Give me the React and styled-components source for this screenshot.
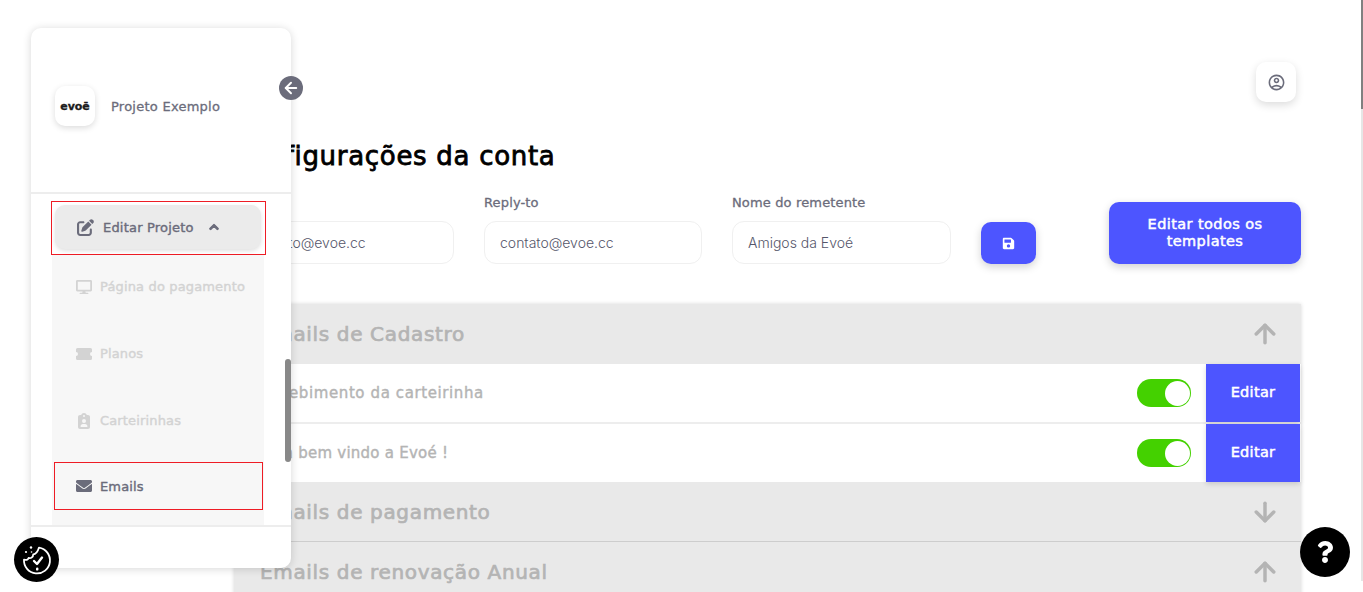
import React from 'react'
import styled, { createGlobalStyle } from 'styled-components'
import { ArrowUp, ArrowDown, ArrowLeft } from 'lucide-react'
import { FaEnvelope, FaSave, FaQuestion, FaChevronUp, FaDesktop } from 'react-icons/fa'
import { FaPenToSquare, FaClipboardUser } from 'react-icons/fa6'
import { MdOutlineAccountCircle } from 'react-icons/md'

const GlobalStyle = createGlobalStyle`
  html, body { margin: 0; padding: 0; background: #fff; overflow: hidden; }
  * { box-sizing: border-box; }
  body { font-family: "DejaVu Sans", sans-serif; }
`

const Page = styled.div`
  position: relative;
  width: 1363px;
  height: 592px;
  overflow: hidden;
`

const Main = styled.main`
  padding: 62px 62px 0 234px;
`

const TopBar = styled.div`
  display: flex;
  justify-content: flex-end;
  padding-right: 5px;
`

const ProfileButton = styled.button`
  width: 40px;
  height: 40px;
  border: none;
  border-radius: 10px;
  background: #fff;
  color: #6b6c7b;
  box-shadow: 0 3px 8px rgba(0, 0, 0, 0.14);
  display: flex;
  align-items: center;
  justify-content: center;
  padding: 0;
`

const Title = styled.h1`
  margin: 39px 0 24px -2px;
  height: 30px;
  line-height: 30px;
  font-size: 26px;
  font-weight: 400;
  letter-spacing: 0.7px;
  -webkit-text-stroke: 0.8px #000;
  color: #000;
  white-space: nowrap;
`

const FormRow = styled.div`
  display: flex;
  align-items: flex-end;
  padding: 0 0 0 2px;
  margin-bottom: 40px;
`

const Field = styled.label`
  width: ${(p) => p.$width}px;
  margin-right: 30px;
  display: flex;
  flex-direction: column;
  gap: 12px;
`

const FieldLabel = styled.span`
  height: 14px;
  line-height: 15px;
  font-size: 13px;
  letter-spacing: 0.15px;
  color: #6b6c7b;
  -webkit-text-stroke: 0.3px #6b6c7b;
`

const Input = styled.input`
  width: 100%;
  height: 43px;
  border: 1px solid #f0f0f0;
  border-radius: 12px;
  padding: 0 15px;
  font-family: "Inter", sans-serif;
  font-size: 14px;
  font-weight: 300;
  color: #55566a;
  background: #fff;
  outline: none;
`

const SaveButton = styled.button`
  width: 55px;
  height: 42px;
  border: none;
  border-radius: 10px;
  background: #4d55ff;
  color: #fff;
  box-shadow: 0 3px 8px rgba(0, 0, 0, 0.18);
  display: flex;
  align-items: center;
  justify-content: center;
  padding: 0;
`

const AllTemplatesButton = styled.button`
  margin-left: auto;
  width: 192px;
  height: 62px;
  border: none;
  border-radius: 10px;
  background: #4d55ff;
  color: #fff;
  box-shadow: 0 3px 8px rgba(0, 0, 0, 0.18);
  font-family: inherit;
  font-size: 14.5px;
  letter-spacing: 0.4px;
  -webkit-text-stroke: 0.5px #fff;
  line-height: 17px;
  padding: 0 26px;
`

const Accordion = styled.section`
  box-shadow: 0 0 4px rgba(0, 0, 0, 0.16);
`

const SectionHeader = styled.div`
  height: ${(p) => p.$height}px;
  padding: 0 21px 0 26px;
  display: flex;
  align-items: center;
  justify-content: space-between;
  background: #e9e9e9;
  color: #b4b4b4;
  font-size: 20px;
  letter-spacing: 0.65px;
  -webkit-text-stroke: 0.7px #b4b4b4;
  border-bottom: ${(p) => (p.$divider ? '1px solid #cdcdcd' : 'none')};
`

const Row = styled.div`
  height: ${(p) => p.$height}px;
  background: #fff;
  display: flex;
  align-items: center;
  padding: 0 1px 0 26px;
  color: #b4b4b4;
  font-size: 15px;
  -webkit-text-stroke: 0.4px #b4b4b4;
  border-bottom: ${(p) => (p.$divider ? '2px solid #ededed' : 'none')};
`

const RowText = styled.span`
  flex: 1;
  letter-spacing: ${(p) => p.$spacing}px;
  margin-top: -1px;
`

const Toggle = styled.span`
  width: 54px;
  height: 28px;
  border-radius: 14px;
  background: #44d100;
  display: flex;
  align-items: center;
  justify-content: flex-end;
  padding-right: 1px;
  margin-right: 15px;
`

const Knob = styled.span`
  width: 25px;
  height: 25px;
  border-radius: 50%;
  background: #fff;
`

const EditButton = styled.button`
  width: 94px;
  height: 100%;
  border: none;
  background: #4d55ff;
  color: #fff;
  font-family: inherit;
  font-size: 14.5px;
  letter-spacing: 0.3px;
  -webkit-text-stroke: 0.5px #fff;
  box-shadow: 0 2px 5px rgba(0, 0, 0, 0.14);
  padding: 0 0 2px;
`

const Sidebar = styled.aside`
  position: absolute;
  left: 31px;
  top: 28px;
  width: 260px;
  height: 540px;
  background: #fff;
  border-radius: 10px;
  box-shadow: 0 1px 8px rgba(0, 0, 0, 0.16);
  display: flex;
  flex-direction: column;
`

const SidebarHeader = styled.div`
  height: 166px;
  padding: 0 24px 8px;
  flex-shrink: 0;
  display: flex;
  align-items: center;
  gap: 16px;
  border-bottom: 2px solid #ededed;
`

const LogoBox = styled.div`
  width: 40px;
  height: 40px;
  border-radius: 10px;
  background: #fff;
  box-shadow: 0 2px 6px rgba(0, 0, 0, 0.14);
  display: flex;
  align-items: center;
  justify-content: center;
  color: #1c1c1c;
  font-size: 11px;
  font-weight: 700;
  -webkit-text-stroke: 0.3px #1c1c1c;
`

const ProjectName = styled.span`
  font-size: 13px;
  letter-spacing: 0.25px;
  color: #6b6c7b;
  -webkit-text-stroke: 0.3px #6b6c7b;
`

const BackButton = styled.div`
  position: absolute;
  left: 248px;
  top: 48px;
  width: 24px;
  height: 24px;
  border-radius: 50%;
  background: #6b6c7b;
  color: #fff;
  display: flex;
  align-items: center;
  justify-content: center;
`

const Nav = styled.nav`
  flex: 1;
  padding: 0 21px;
  position: relative;
  overflow: hidden;
`

const Outlined = styled.div`
  border: 1px solid #ee1c25;
  display: flex;
  align-items: center;
`

const EditOutline = styled(Outlined)`
  width: 215px;
  height: 54px;
  margin: 7px 0 0 -1px;
  padding: 0 4px 2px 3px;
`

const EditProject = styled.div`
  width: 100%;
  height: 44px;
  border-radius: 10px;
  background: #ebebeb;
  box-shadow: 0 2px 4px rgba(0, 0, 0, 0.12);
  display: flex;
  align-items: center;
  padding-left: 22px;
  gap: 9px;
  color: #6b6c7b;
  font-size: 13px;
  letter-spacing: 0.2px;
  -webkit-text-stroke: 0.4px #6b6c7b;
`

const ChevronSlot = styled.span`
  display: flex;
  margin-left: 6px;

  svg {
    stroke: currentColor;
    stroke-width: 60px;
  }
`

const SubMenu = styled.div`
  width: 212px;
  height: 270px;
  background: #f7f7f7;
`

const SubItem = styled.div`
  height: 67px;
  padding: 0 0 4px 24px;
  display: flex;
  align-items: center;
  gap: 8px;
  color: ${(p) => (p.$active ? '#6b6c7b' : '#d3d3d3')};
  font-size: 13px;
  letter-spacing: 0.15px;
  -webkit-text-stroke: 0.4px ${(p) => (p.$active ? '#6b6c7b' : '#d3d3d3')};
`

const EmailsOutline = styled(Outlined)`
  height: 48px;
  width: 209px;
  margin: 6px 0 0 2px;
`

const EmailsItem = styled(SubItem)`
  height: 100%;
  padding: 0 0 0 21px;
`

const IconSlot = styled.span`
  width: 16px;
  display: flex;
  justify-content: center;
`

const NavThumb = styled.div`
  position: absolute;
  right: 0;
  top: 165px;
  width: 6px;
  height: 103px;
  border-radius: 3px;
  background: #888;
`

const SidebarFooter = styled.div`
  height: 43px;
  flex-shrink: 0;
  border-top: 2px solid #ededed;
`

const CookieBadge = styled.div`
  position: absolute;
  left: 14px;
  top: 537px;
  width: 45px;
  height: 45px;
  border-radius: 50%;
  background: #000;
  display: flex;
  align-items: center;
  justify-content: center;
`

const HelpBadge = styled.div`
  position: absolute;
  left: 1300px;
  top: 527px;
  width: 50px;
  height: 50px;
  border-radius: 50%;
  background: #000;
  color: #fff;
  display: flex;
  align-items: center;
  justify-content: center;
`

const ScrollTrack = styled.div`
  position: absolute;
  right: 0;
  top: 0;
  width: 2px;
  height: 581px;
  background: #e6e6e6;
`

const ScrollThumb = styled.div`
  width: 2px;
  height: 109px;
  background: #808080;
`

const TicketIcon = () => (
  <svg width="16" height="12" viewBox="0 0 16 12" fill="currentColor">
    <path d="M1.5 0h13A1.5 1.5 0 0 1 16 1.5V4a2 2 0 0 0 0 4v2.5a1.5 1.5 0 0 1-1.5 1.5h-13A1.5 1.5 0 0 1 0 10.5V8a2 2 0 0 0 0-4V1.5A1.5 1.5 0 0 1 1.5 0z" />
  </svg>
)

const CookieIcon = () => (
  <svg width="32" height="32" viewBox="0 0 32 32" fill="none" stroke="#fff" strokeWidth="1.8" strokeLinecap="round" strokeLinejoin="round">
    <path d="M18 3.6a13 13 0 1 1-15 12c2 .8 4 .2 4.6-1.6 2.6.6 4.6-1 4.6-3.6 2.8 0 4.6-2.8 5.8-6.8z" />
    <path d="M13 17l3 3 5-6.4" strokeWidth="2.4" />
    <path d="M16.2 24.6v.8" strokeWidth="2.4" />
    <circle cx="10" cy="3.5" r="1.2" fill="#fff" stroke="none" />
    <circle cx="5" cy="8" r="1.1" fill="#fff" stroke="none" />
    <circle cx="10.5" cy="8" r="0.8" fill="#fff" stroke="none" />
  </svg>
)

const App = () => {
  return (
    <Page>
      <GlobalStyle />
      <Main>
        <TopBar>
          <ProfileButton>
            <MdOutlineAccountCircle size={19} />
          </ProfileButton>
        </TopBar>
        <Title>Configurações da conta</Title>
        <FormRow>
          <Field $width={218}>
            <FieldLabel>Email</FieldLabel>
            <Input readOnly value="contato@evoe.cc" />
          </Field>
          <Field $width={218}>
            <FieldLabel>Reply-to</FieldLabel>
            <Input readOnly value="contato@evoe.cc" />
          </Field>
          <Field $width={219}>
            <FieldLabel>Nome do remetente</FieldLabel>
            <Input readOnly value="Amigos da Evoé" />
          </Field>
          <SaveButton>
            <FaSave size={13} />
          </SaveButton>
          <AllTemplatesButton>Editar todos os templates</AllTemplatesButton>
        </FormRow>
        <Accordion>
          <SectionHeader $height={60}>
            Emails de Cadastro
            <ArrowUp size={30} strokeWidth={2.8} color="#b4b4b4" />
          </SectionHeader>
          <Row $height={60} $divider>
            <RowText $spacing={0.6}>Recebimento da carteirinha</RowText>
            <Toggle><Knob /></Toggle>
            <EditButton>Editar</EditButton>
          </Row>
          <Row $height={58}>
            <RowText $spacing={0.25}>Seja bem vindo a Evoé !</RowText>
            <Toggle><Knob /></Toggle>
            <EditButton>Editar</EditButton>
          </Row>
          <SectionHeader $height={60} $divider>
            Emails de pagamento
            <ArrowDown size={30} strokeWidth={2.8} color="#b4b4b4" />
          </SectionHeader>
          <SectionHeader $height={60}>
            Emails de renovação Anual
            <ArrowUp size={30} strokeWidth={2.8} color="#b4b4b4" />
          </SectionHeader>
        </Accordion>
      </Main>

      <Sidebar>
        <SidebarHeader>
          <LogoBox>evoē</LogoBox>
          <ProjectName>Projeto Exemplo</ProjectName>
        </SidebarHeader>
        <BackButton>
          <ArrowLeft size={18} strokeWidth={2.6} />
        </BackButton>
        <Nav>
          <EditOutline>
            <EditProject>
              <FaPenToSquare size={17} />
              Editar Projeto
              <ChevronSlot><FaChevronUp size={10} /></ChevronSlot>
            </EditProject>
          </EditOutline>
          <SubMenu>
            <SubItem><IconSlot><FaDesktop size={16} /></IconSlot>Página do pagamento</SubItem>
            <SubItem><IconSlot><TicketIcon /></IconSlot>Planos</SubItem>
            <SubItem><IconSlot><FaClipboardUser size={16} /></IconSlot>Carteirinhas</SubItem>
            <EmailsOutline>
              <EmailsItem $active><IconSlot><FaEnvelope size={16} /></IconSlot>Emails</EmailsItem>
            </EmailsOutline>
          </SubMenu>
          <NavThumb />
        </Nav>
        <SidebarFooter />
      </Sidebar>

      <CookieBadge><CookieIcon /></CookieBadge>
      <HelpBadge><FaQuestion size={22} /></HelpBadge>
      <ScrollTrack><ScrollThumb /></ScrollTrack>
    </Page>
  )
}

export default App
